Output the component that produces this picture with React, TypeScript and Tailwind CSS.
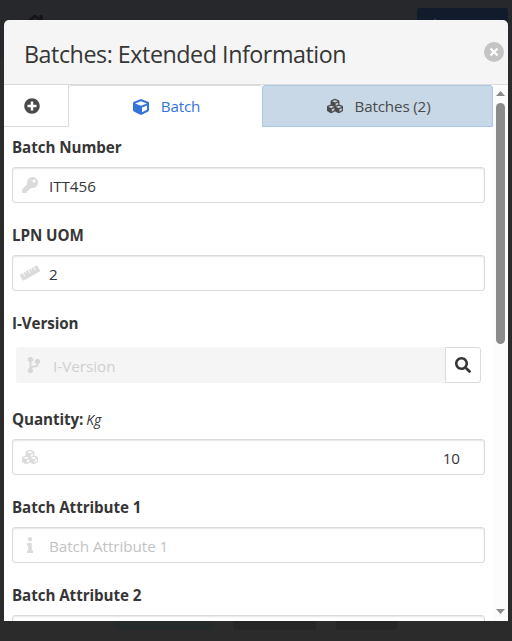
import React from "react";
import {
  FaCodeBranch,
  FaCube,
  FaCubes,
  FaHome,
  FaInfo,
  FaKey,
  FaPlus,
  FaPlusCircle,
  FaRuler,
  FaSearch,
} from "react-icons/fa";

type FieldProps = {
  label: string;
  icon: React.ReactNode;
  value?: string;
  placeholder?: string;
  unit?: string;
  alignRight?: boolean;
};

function Label({ text, unit }: { text: string; unit?: string }) {
  return (
    <div className="h-6 whitespace-nowrap text-[15.2px] leading-6 text-[#363636]">
      <span className="font-bold tracking-[-0.08px]">{text}</span>
      {unit && <span className="ml-[3px] text-[14px] italic tracking-[-0.1px]">{unit}</span>}
    </div>
  );
}

function Field({ label, icon, value, placeholder, unit, alignRight }: FieldProps) {
  return (
    <div className="mb-5">
      <Label text={label} unit={unit} />
      <div className="mt-2 flex h-9 items-center rounded-[3px] border border-[#dbdbdb] bg-white text-[15.2px] tracking-[-0.04px] shadow-[inset_0_1px_2px_rgba(10,10,10,0.1)]">
        <span className="flex w-9 shrink-0 justify-center pr-[2px] text-[#dbdbdb]">{icon}</span>
        {value ? (
          <span className={`grow pt-[2px] text-[#363636] ${alignRight ? "pr-6 text-right" : ""}`}>{value}</span>
        ) : (
          <span className="grow pt-[2px] text-[#c3c3c3]">{placeholder}</span>
        )}
      </div>
    </div>
  );
}

function Backdrop() {
  return (
    <div className="absolute inset-0 bg-[#2b2b2b]">
      <div className="h-[58px] bg-[#27282b]" />
      <FaHome className="absolute left-[24px] top-[13px] h-[21px] w-[22px] text-[#141416]" />
      <div className="absolute left-[417px] top-2 flex h-9 w-[91px] rounded-[3px] bg-[#111b2b] pl-3 pt-[10px] text-[#3a414c]">
        <FaPlus size={12} />
      </div>
      <div className="absolute bottom-[11px] left-[115px] h-8 w-[98px] rounded bg-[#252a2a]" />
      <div className="absolute bottom-[11px] left-[233px] h-8 w-[83px] rounded bg-[#252525]" />
      <div className="absolute bottom-[11px] left-[336px] h-8 w-[61px] rounded bg-[#252525]" />
    </div>
  );
}

function Scrollbar() {
  return (
    <div className="flex w-[15px] shrink-0 flex-col items-center bg-[#fcfcfc]">
      <svg className="mt-[6px] h-[5px] w-[9px] shrink-0" viewBox="0 0 9 5">
        <path d="M0 5 4.5 0 9 5z" fill="#8b8b8b" />
      </svg>
      <div className="mt-[7px] h-[241px] w-[9px] shrink-0 rounded-full bg-[#8b8b8b]" />
      <div className="grow" />
      <svg className="mb-[7px] h-[5px] w-[9px] shrink-0" viewBox="0 0 9 5">
        <path d="M0 0h9L4.5 5z" fill="#8b8b8b" />
      </svg>
    </div>
  );
}

export default function App() {
  return (
    <div className="relative h-[641px] w-[512px] overflow-hidden font-['Open_Sans','Noto_Sans',sans-serif]">
      <Backdrop />
      <div className="relative ml-1 flex h-[621px] w-[504px] flex-col pt-5">
        <header className="flex h-[65px] shrink-0 items-center justify-between rounded-t-[5px] border-b border-[#dbdbdb] bg-[#f5f5f5] pl-5 pr-1">
          <h1 className="whitespace-nowrap pt-[3px] text-[23.3px] leading-6 tracking-[-0.47px] text-[#363636]">
            Batches: Extended Information
          </h1>
          <span className="flex size-5 items-center justify-center rounded-full bg-[#c4c4c4]">
            <svg className="size-[10px]" viewBox="0 0 10 10">
              <path d="M1.5 1.5l7 7M8.5 1.5l-7 7" stroke="#fff" strokeWidth="2.2" />
            </svg>
          </span>
        </header>
        <div className="flex min-h-0 grow bg-white">
          <main className="w-[489px] shrink-0 overflow-hidden">
            <nav className="flex h-[42px] text-[15.2px] tracking-[-0.15px]">
              <div className="flex w-[65px] items-center border-b border-r border-[#dbdbdb] pl-5 text-[#4a4a4a]">
                <FaPlusCircle size={16} />
              </div>
              <div className="flex w-[193px] items-center justify-center gap-3 rounded-t-[3px] border-t border-[#dbdbdb] pl-[2px] text-[#3273dc]">
                <FaCube size={16} />
                <span>Batch</span>
              </div>
              <div className="flex w-[231px] items-center justify-center gap-3 rounded-t-[3px] border border-[#abc7e6] bg-[#c8d8e7] pl-[2px] text-[#4a4a4a]">
                <FaCubes size={16} stroke="currentColor" strokeWidth={8} />
                <span>Batches (2)</span>
              </div>
            </nav>
            <div className="px-2 pt-2">
              <Field label="Batch Number" icon={<FaKey size={16} />} value="ITT456" />
              <Field
                label="LPN UOM"
                icon={<FaRuler className="shrink-0" size={20} stroke="currentColor" strokeWidth={6} />}
                value="2"
              />
              <div className="mb-6">
                <Label text="I-Version" />
                <div className="mx-1 mt-3 flex h-9">
                  <div className="flex grow items-center rounded-l-[3px] bg-[#f5f5f5] text-[15.2px] tracking-[0px] text-[#d0d0d0]">
                    <span className="flex w-[37px] shrink-0 justify-center pr-[2px] text-[#d6d6d6]">
                      <FaCodeBranch size={16} stroke="currentColor" strokeWidth={10} />
                    </span>
                    <span className="pt-[2px]">I-Version</span>
                  </div>
                  <div className="flex w-9 items-center justify-center rounded-r-[3px] border border-[#dbdbdb] text-[#363636]">
                    <FaSearch size={16} />
                  </div>
                </div>
              </div>
              <Field
                label="Quantity:"
                unit="Kg"
                icon={<FaCubes size={16} stroke="currentColor" strokeWidth={8} />}
                value="10"
                alignRight
              />
              <Field label="Batch Attribute 1" icon={<FaInfo size={16} />} placeholder="Batch Attribute 1" />
              <Field label="Batch Attribute 2" icon={<FaInfo size={16} />} />
            </div>
          </main>
          <Scrollbar />
        </div>
      </div>
    </div>
  );
}
